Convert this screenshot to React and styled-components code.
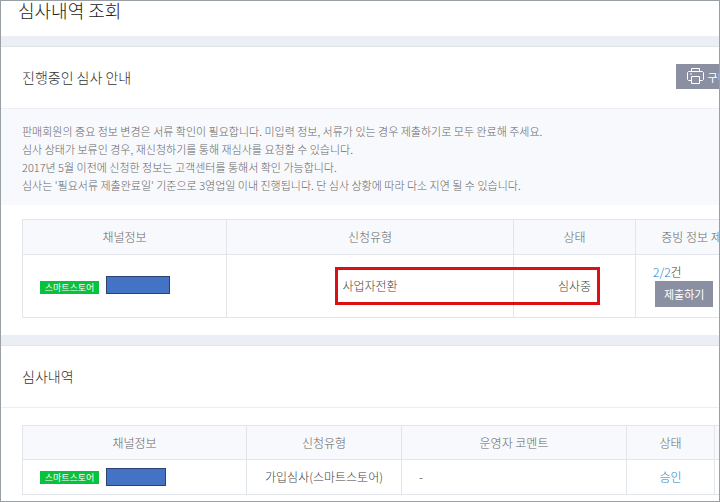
import React from "react";
import styled, { createGlobalStyle } from "styled-components";

const GlobalStyle = createGlobalStyle`
    * {
        box-sizing: border-box;
    }
    body {
        margin: 0;
        background-color: white;
        color: #444;
        font-family: "Noto Sans CJK KR", "Noto Sans", sans-serif;
        font-size: 12px;
        font-weight: 300;
        line-height: 18px;
    }
`;

const Frame = styled.main`
    border: 1px solid #98a0a6;
    overflow: hidden;
    background-color: #ebeef4;
`;

const Wide = styled.div`
    display: flex;
    flex-direction: column;
    gap: 10px;
    width: calc(100% + 60px);
`;

const PageHeader = styled.header`
    padding: 0 17px 17px;
    background-color: white;
`;

const PageTitle = styled.h1`
    margin: 0;
    color: #222;
    font-size: 18px;
    font-weight: 300;
    line-height: 18px;
`;

const Panel = styled.section`
    background-color: white;
    border-top: 1px solid #e0e3e8;
`;

const PanelHeader = styled.div`
    display: flex;
    justify-content: space-between;
    align-items: center;
    height: 62px;
    padding: 0 20px 2px 21px;
    border-bottom: 1px solid #eceef1;
`;

const PanelTitle = styled.h2`
    margin: 0;
    color: #333;
    font-size: 14px;
    font-weight: 300;
    line-height: 18px;
`;

const GrayBtn = styled.button`
    display: flex;
    align-items: center;
    gap: 4px;
    height: ${({ $small }) => ($small ? "26px" : "25px")};
    margin: ${({ $small }) => ($small ? "0 0 0 2px" : "0")};
    padding: ${({ $small }) => ($small ? "0 9px" : "0 11px")};
    border: none;
    background-color: #8a8fa2;
    color: white;
    font-family: inherit;
    font-size: 11px;
    white-space: nowrap;
    cursor: pointer;
`;

const Notice = styled.p`
    margin: 0;
    padding: 13px 21px 11px;
    background-color: #f8f9fc;
    color: #666;
    font-size: 11px;
`;

const TableArea = styled.div`
    padding: ${({ $last }) => ($last ? "17px 20px 6px 21px" : "14px 20px 17px 21px")};
`;

const Table = styled.table`
    width: 100%;
    border-collapse: collapse;
    table-layout: fixed;
`;

const Col = styled.col`
    width: ${({ $width }) => ($width ? `${$width}px` : "auto")};
`;

const Th = styled.th`
    height: ${({ $short }) => ($short ? "34px" : "35px")};
    padding: 0;
    border: 1px solid #e2e5ea;
    background-color: #f8f9fc;
    color: #666;
    font-weight: 300;
`;

const Td = styled.td`
    height: ${({ $tall }) => ($tall ? "63px" : "35px")};
    padding: ${({ $left, $tall }) => ($left ? ($tall ? "0 17px 3px" : "0 17px") : "0")};
    border: 1px solid #e2e5ea;
    text-align: ${({ $left }) => ($left ? "left" : "center")};
`;

const Channel = styled.div`
    display: flex;
    align-items: ${({ $bottom }) => ($bottom ? "flex-end" : "center")};
    gap: 7px;
`;

const Badge = styled.span`
    width: 59px;
    background-color: #08c13c;
    color: white;
    font-size: 9px;
    font-weight: 400;
    line-height: 13px;
    text-align: center;
`;

const Mask = styled.span`
    width: ${({ $width }) => $width}px;
    height: 18px;
    border: 1px solid #2b4474;
    background-color: #4472c4;
`;

const Marked = styled.span`
    position: relative;
`;

const MarkBox = styled.span`
    position: absolute;
    top: -10px;
    left: -7px;
    width: 265px;
    height: 38px;
    border: 3px solid #dc1014;
    pointer-events: none;
`;

const Blue = styled.span`
    color: #1480c8;
`;

const PrinterIcon = () => (
    <svg width="17" height="17" viewBox="0 0 17 17" fill="none" stroke="white" aria-hidden="true">
        <path d="M4.5 3.5v-3h8v3M4.5 12.5h-3l-1-1v-7l1-1h14l1 1v7l-1 1h-3" />
        <path d="M4.5 8.5h8v7h-8zM3 6h2" />
    </svg>
);

const App = () => {
    return (
        <>
            <GlobalStyle />
            <Frame>
                <Wide>
                    <PageHeader>
                        <PageTitle>심사내역 조회</PageTitle>
                    </PageHeader>
                    <Panel>
                        <PanelHeader>
                            <PanelTitle>진행중인 심사 안내</PanelTitle>
                            <GrayBtn type="button">
                                <PrinterIcon />
                                구비서류
                            </GrayBtn>
                        </PanelHeader>
                        <Notice>
                            판매회원의 중요 정보 변경은 서류 확인이 필요합니다. 미입력 정보, 서류가 있는 경우 제출하기로 모두 완료해 주세요.<br />
                            심사 상태가 보류인 경우, 재신청하기를 통해 재심사를 요청할 수 있습니다.<br />
                            2017년 5월 이전에 신청한 정보는 고객센터를 통해서 확인 가능합니다.<br />
                            심사는 '필요서류 제출완료일' 기준으로 3영업일 이내 진행됩니다. 단 심사 상황에 따라 다소 지연 될 수 있습니다.
                        </Notice>
                        <TableArea>
                            <Table>
                                <colgroup>
                                    <Col $width={204} />
                                    <Col />
                                    <Col $width={122} />
                                    <Col $width={123} />
                                </colgroup>
                                <thead>
                                    <tr>
                                        <Th>채널정보</Th>
                                        <Th>신청유형</Th>
                                        <Th>상태</Th>
                                        <Th>증빙 정보 제출</Th>
                                    </tr>
                                </thead>
                                <tbody>
                                    <tr>
                                        <Td $tall $left>
                                            <Channel $bottom>
                                                <Badge>스마트스토어</Badge>
                                                <Mask $width={64} />
                                            </Channel>
                                        </Td>
                                        <Td $tall>
                                            <Marked>
                                                사업자전환
                                                <MarkBox />
                                            </Marked>
                                        </Td>
                                        <Td $tall>심사중</Td>
                                        <Td $tall $left>
                                            <Blue>2/2</Blue>건
                                            <GrayBtn type="button" $small>제출하기</GrayBtn>
                                        </Td>
                                    </tr>
                                </tbody>
                            </Table>
                        </TableArea>
                    </Panel>
                    <Panel>
                        <PanelHeader>
                            <PanelTitle>심사내역</PanelTitle>
                        </PanelHeader>
                        <TableArea $last>
                            <Table>
                                <colgroup>
                                    <Col $width={224} />
                                    <Col $width={155} />
                                    <Col />
                                    <Col $width={88} />
                                    <Col $width={44} />
                                </colgroup>
                                <thead>
                                    <tr>
                                        <Th $short>채널정보</Th>
                                        <Th $short>신청유형</Th>
                                        <Th $short>운영자 코멘트</Th>
                                        <Th $short>상태</Th>
                                        <Th $short />
                                    </tr>
                                </thead>
                                <tbody>
                                    <tr>
                                        <Td $left>
                                            <Channel>
                                                <Badge>스마트스토어</Badge>
                                                <Mask $width={60} />
                                            </Channel>
                                        </Td>
                                        <Td>가입심사(스마트스토어)</Td>
                                        <Td $left>-</Td>
                                        <Td><Blue>승인</Blue></Td>
                                        <Td />
                                    </tr>
                                </tbody>
                            </Table>
                        </TableArea>
                    </Panel>
                </Wide>
            </Frame>
        </>
    );
};

export default App;
